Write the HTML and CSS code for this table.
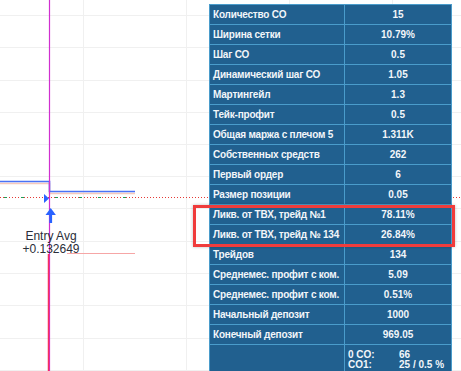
FILE: index.html
```html
<!DOCTYPE html>
<html lang="ru">
<head>
<meta charset="utf-8">
<link rel="stylesheet" href="styles.css">
</head>
<body>
<div class="chart">
  <svg class="plot" width="461" height="371" viewBox="0 0 461 371">
    <g stroke="#f0f0f0" stroke-width="1">
      <line x1="0" y1="15.5" x2="461" y2="15.5"/>
      <line x1="0" y1="47.5" x2="461" y2="47.5"/>
      <line x1="0" y1="80.5" x2="461" y2="80.5"/>
      <line x1="0" y1="112.5" x2="461" y2="112.5"/>
      <line x1="0" y1="144.5" x2="461" y2="144.5"/>
      <line x1="0" y1="176.5" x2="461" y2="176.5"/>
      <line x1="0" y1="208.5" x2="461" y2="208.5"/>
      <line x1="0" y1="241.5" x2="461" y2="241.5"/>
      <line x1="0" y1="273.5" x2="461" y2="273.5"/>
      <line x1="0" y1="305.5" x2="461" y2="305.5"/>
      <line x1="0" y1="338.5" x2="461" y2="338.5"/>
      <line x1="0" y1="370.5" x2="461" y2="370.5"/>
      <line x1="83.5" y1="0" x2="83.5" y2="371"/>
      <line x1="186.5" y1="0" x2="186.5" y2="371"/>
      <line x1="289.5" y1="0" x2="289.5" y2="371"/>
      <line x1="392.5" y1="0" x2="392.5" y2="371"/>
    </g>
    <path d="M0 183.5 H49.5 V193.5 H135" fill="none" stroke="#f6c9bd" stroke-width="1.5"/>
    <path d="M0 181.5 H49.5 V191.5 H135" fill="none" stroke="#4a72f6" stroke-width="1.6"/>
    <line x1="0" y1="197.5" x2="461" y2="197.5" stroke="#e53935" stroke-width="1" stroke-dasharray="1 2"/>
    <g stroke="#1f9d55" stroke-width="1">
      <line x1="4" y1="197.5" x2="7" y2="197.5"/>
      <line x1="21" y1="197.5" x2="24" y2="197.5"/>
      <line x1="55" y1="197.5" x2="58" y2="197.5"/>
      <line x1="79" y1="197.5" x2="82" y2="197.5"/>
      <line x1="98" y1="197.5" x2="101" y2="197.5"/>
      <line x1="123" y1="197.5" x2="126" y2="197.5"/>
    </g>
    <line x1="49.5" y1="0" x2="49.5" y2="371" stroke="#d02fd0" stroke-width="1.2"/>
    <line x1="135" y1="253.5" x2="67" y2="253.5" stroke="#f6a6a6" stroke-width="1"/>
    <line x1="48.5" y1="254" x2="48.5" y2="371" stroke="#f5305f" stroke-width="1.5"/>
    <polygon points="44,194 49,198.5 44,203" fill="#2962ff"/>
    <polygon points="45.5,215 50.7,208 55.9,215" fill="#2962ff"/>
    <rect x="49.3" y="214" width="2.8" height="9" fill="#2962ff"/>
  </svg>
  <div class="entry-label">Entry Avg<br>+0.132649</div>

  <table class="stats">
    <tr><td class="k">Количество СО</td><td class="v">15</td></tr>
    <tr><td class="k">Ширина сетки</td><td class="v">10.79%</td></tr>
    <tr><td class="k">Шаг СО</td><td class="v">0.5</td></tr>
    <tr><td class="k">Динамический шаг СО</td><td class="v">1.05</td></tr>
    <tr><td class="k">Мартингейл</td><td class="v">1.3</td></tr>
    <tr><td class="k">Тейк-профит</td><td class="v">0.5</td></tr>
    <tr><td class="k">Общая маржа с плечом 5</td><td class="v">1.311K</td></tr>
    <tr><td class="k">Собственных средств</td><td class="v">262</td></tr>
    <tr><td class="k">Первый ордер</td><td class="v">6</td></tr>
    <tr><td class="k">Размер позиции</td><td class="v">0.05</td></tr>
    <tr><td class="k">Ликв. от ТВХ, трейд №1</td><td class="v">78.11%</td></tr>
    <tr><td class="k">Ликв. от ТВХ, трейд № 134</td><td class="v">26.84%</td></tr>
    <tr><td class="k">Трейдов</td><td class="v">134</td></tr>
    <tr><td class="k">Среднемес. профит с ком.</td><td class="v">5.09</td></tr>
    <tr><td class="k">Среднемес. профит с ком.</td><td class="v">0.51%</td></tr>
    <tr><td class="k">Начальный депозит</td><td class="v">1000</td></tr>
    <tr><td class="k">Конечный депозит</td><td class="v">969.05</td></tr>
    <tr class="last"><td class="k"></td><td class="multi">
      <div class="co-grid">
        <span>0 CO:</span><span>66</span>
        <span>CO1:</span><span>25 / 0.5 %</span>
      </div>
    </td></tr>
  </table>

  <div class="highlight"></div>
</div>
</body>
</html>
```

FILE: styles.css
```css
html, body {
  margin: 0;
  padding: 0;
  background: #ffffff;
}

.chart {
  position: relative;
  width: 461px;
  height: 371px;
  overflow: hidden;
  background: #ffffff;
}

.plot {
  position: absolute;
  left: 0;
  top: 0;
  display: block;
}

.entry-label {
  position: absolute;
  left: 11px;
  top: 230px;
  width: 80px;
  text-align: center;
  font-family: "Liberation Sans", Arial, sans-serif;
  font-size: 12px;
  line-height: 13px;
  color: #2a2e39;
}

.stats {
  position: absolute;
  left: 209px;
  top: 4px;
  width: 243px;
  border-collapse: collapse;
  background: #21608f;
  font-family: "Liberation Sans", Arial, sans-serif;
  font-size: 10px;
  font-weight: 700;
  color: #f2f6fa;
  table-layout: fixed;
}

.stats td {
  border: 1px solid #4a9ccb;
  height: 20px;
  padding: 0 3px;
  line-height: 12px;
  white-space: nowrap;
  box-sizing: border-box;
}

.stats td.k {
  width: 135px;
  text-align: left;
  letter-spacing: -0.2px;
}

.stats td.v {
  text-align: center;
}

.stats tr.last td {
  height: 34px;
  vertical-align: top;
}

.stats td.multi {
  padding-top: 5px;
  padding-left: 3px;
}

.co-grid {
  display: grid;
  grid-template-columns: 51px auto;
  line-height: 10px;
  font-size: 10px;
}

.highlight {
  position: absolute;
  left: 193px;
  top: 205px;
  width: 262px;
  height: 42px;
  box-sizing: border-box;
  border: 3px solid #f03c3c;
  box-shadow: 0 0 3px rgba(0, 0, 0, 0.25);
}
```
